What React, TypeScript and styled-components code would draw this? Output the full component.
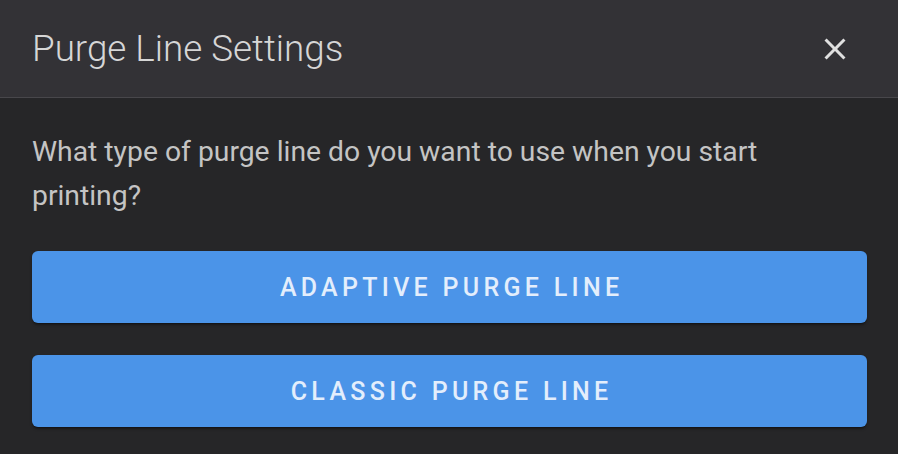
import styled, { createGlobalStyle } from "styled-components";

const GlobalStyle = createGlobalStyle`
	html, body {
		margin: 0;
		padding: 0;
		background: #262628;
	}
	body {
		font-family: Roboto, "Liberation Sans", sans-serif;
	}
`;

const Dialog = styled.div`
	width: 898px;
	height: 454px;
	background: #262628;
	overflow: hidden;
`;

const Header = styled.header`
	display: flex;
	align-items: center;
	justify-content: space-between;
	height: 97px;
	padding: 0 32px;
	background: #333236;
	border-bottom: 1px solid #48474b;
`;

const Title = styled.h2`
	margin: 0;
	color: #d6d6d6;
	font-size: 36.8px;
	font-weight: 300;
	letter-spacing: 0;
`;

const CloseButton = styled.button`
	display: flex;
	align-items: center;
	justify-content: center;
	width: 48px;
	height: 48px;
	margin-right: 7px;
	padding: 0;
	border: none;
	background: transparent;
	color: #e0e0e0;
	cursor: pointer;
`;

const Body = styled.div`
	padding: 32px 31px 0 32px;
`;

const Question = styled.p`
	margin: 0 0 33px;
	color: #c4c4c4;
	font-size: 28.3px;
	line-height: 44px;
`;

const Options = styled.div`
	display: flex;
	flex-direction: column;
	gap: 32px;
`;

const OptionButton = styled.button`
	height: 72px;
	border: none;
	border-radius: 6px;
	background: #4b94e8;
	color: #e3eefc;
	font-family: inherit;
	font-size: 25px;
	font-weight: 500;
	letter-spacing: 4.3px;
	text-indent: 4.3px;
	text-transform: uppercase;
	box-shadow: 0 3px 2px -2px rgba(0, 0, 0, 0.35), 0 2px 3px rgba(0, 0, 0, 0.25);
	cursor: pointer;
`;

function CloseIcon() {
	return (
		<svg width="36" height="36" viewBox="0 0 24 24" fill="currentColor">
			<path d="M19,6.41L17.59,5L12,10.59L6.41,5L5,6.41L10.59,12L5,17.59L6.41,19L12,13.41L17.59,19L19,17.59L13.41,12L19,6.41Z" />
		</svg>
	);
}

const options = ["Adaptive purge line", "Classic purge line"];

function App() {
	return (
		<>
			<GlobalStyle />
			<Dialog>
				<Header>
					<Title>Purge Line Settings</Title>
					<CloseButton aria-label="close">
						<CloseIcon />
					</CloseButton>
				</Header>
				<Body>
					<Question>
						What type of purge line do you want to use when you start printing?
					</Question>
					<Options>
						{options.map((opt) => (
							<OptionButton key={opt}>{opt}</OptionButton>
						))}
					</Options>
				</Body>
			</Dialog>
		</>
	);
}

export default App;
